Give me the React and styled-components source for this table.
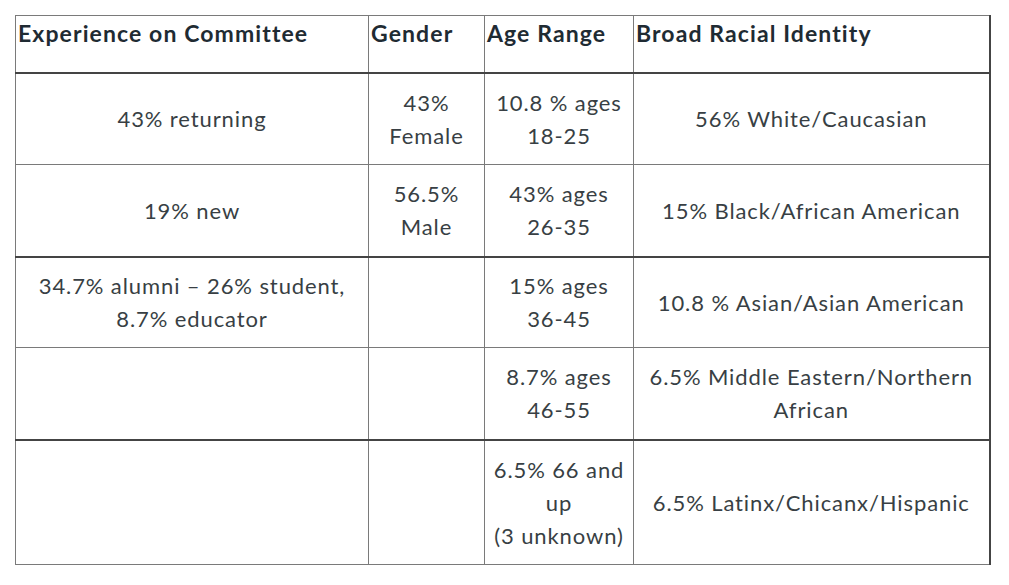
import { Fragment } from "react";
import styled, { createGlobalStyle } from "styled-components";

const GlobalStyle = createGlobalStyle`
    html, body {
        margin: 0;
        padding: 0;
        background: #ffffff;
    }
`

const Page = styled.div`
    padding: 15px 0 0 15px;
    font-family: "Lato", "Open Sans", sans-serif;
`

const Table = styled.table`
    border-collapse: collapse;
    table-layout: fixed;
    width: 975px;
    border-right: 2px solid #444;
`

const HeadCell = styled.th`
    width: ${(p) => p.w}px;
    height: 57px;
    padding: 3px 2px 0 2px;
    vertical-align: top;
    text-align: left;
    font-size: 23px;
    letter-spacing: 1.1px;
    font-weight: 700;
    color: #1f2b33;
    white-space: nowrap;
    border: 1px solid #7a7a7a;
    border-bottom: 2px solid #444;
    box-sizing: border-box;
`

const Row = styled.tr`
    height: ${(p) => p.h}px;
    border-top: ${(p) => (p.thick ? "2px solid #444" : "1px solid #7a7a7a")};
`

const Cell = styled.td`
    padding: 0 2px;
    text-align: center;
    vertical-align: middle;
    font-size: 22px;
    line-height: 33px;
    letter-spacing: 0.9px;
    font-weight: 400;
    color: #383f44;
    white-space: nowrap;
    border-left: 1px solid #7a7a7a;
    border-right: 1px solid #7a7a7a;
    border-bottom: 1px solid #7a7a7a;
`

const rows = [
    { h: 92, thick: false, cells: [["43% returning"], ["43%", "Female"], ["10.8 % ages", "18-25"], ["56% White/Caucasian"]] },
    { h: 92, thick: false, cells: [["19% new"], ["56.5%", "Male"], ["43% ages", "26-35"], ["15% Black/African American"]] },
    { h: 91, thick: true, cells: [["34.7% alumni – 26% student,", "8.7% educator"], [], ["15% ages", "36-45"], ["10.8 % Asian/Asian American"]] },
    { h: 92, thick: false, cells: [[], [], ["8.7% ages", "46-55"], ["6.5% Middle Eastern/Northern", "African"]] },
    { h: 125, thick: true, cells: [[], [], ["6.5% 66 and", "up", "(3 unknown)"], ["6.5% Latinx/Chicanx/Hispanic"]] },
]

const App = () => {
  return (
    <Page>
        <GlobalStyle/>
        <Table>
            <thead>
                <tr>
                    <HeadCell w={353}>Experience on Committee</HeadCell>
                    <HeadCell w={116}>Gender</HeadCell>
                    <HeadCell w={149}>Age Range</HeadCell>
                    <HeadCell w={356}>Broad Racial Identity</HeadCell>
                </tr>
            </thead>
            <tbody>
                {rows.map((r, i) => (
                    <Row key={i} h={r.h} thick={r.thick}>
                        {r.cells.map((lines, j) => (
                            <Cell key={j}>
                                {lines.map((l, k) => (
                                    <Fragment key={k}>
                                        {k > 0 && <br/>}
                                        {l}
                                    </Fragment>
                                ))}
                            </Cell>
                        ))}
                    </Row>
                ))}
            </tbody>
        </Table>
    </Page>
  )
}

export default App
